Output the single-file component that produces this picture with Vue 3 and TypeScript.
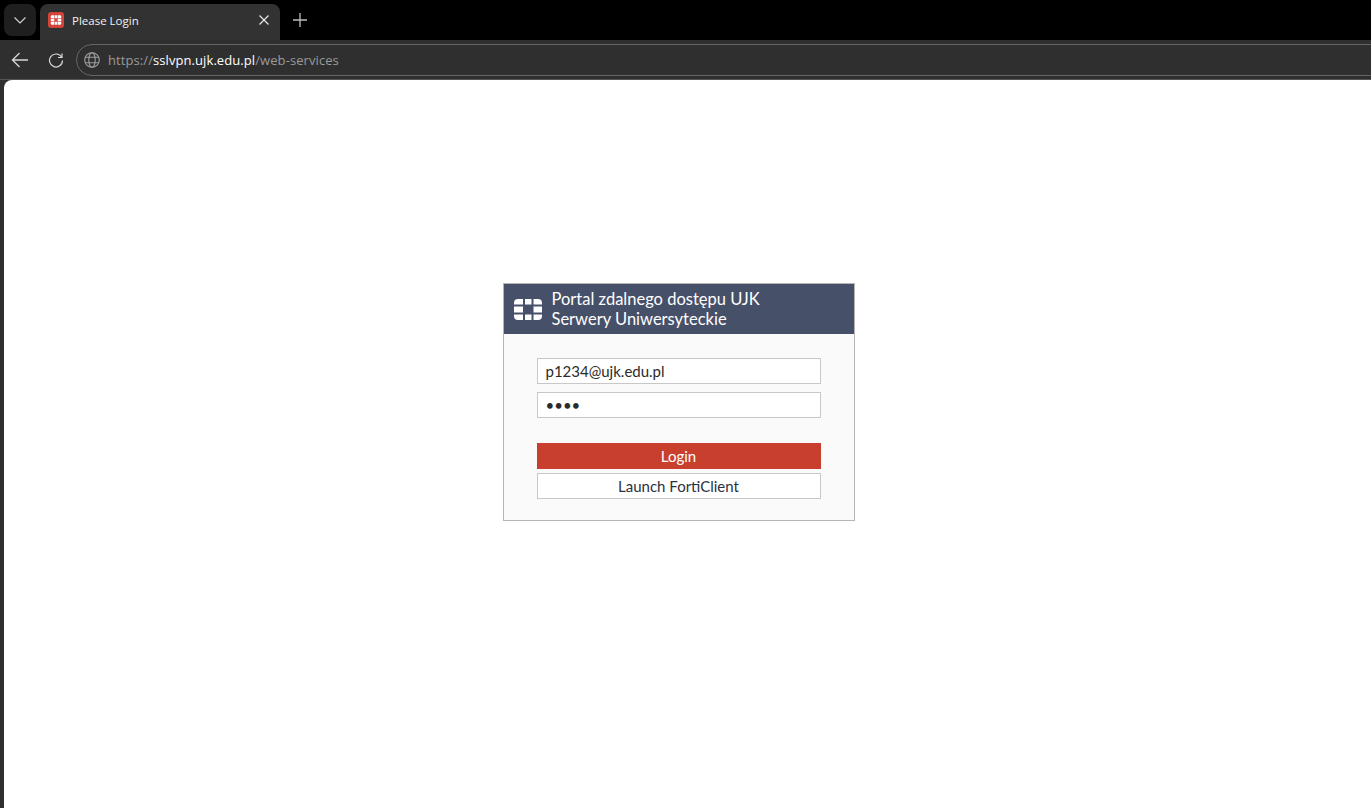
<script setup lang="ts">
const username: string = 'p1234@ujk.edu.pl'
const password: string = 'abcd'
</script>

<template>
  <div class="browser">
    <div class="tabstrip">
      <button class="tab-menu" aria-label="Tab search">
        <svg width="14" height="14" viewBox="0 0 14 14"><path d="M1.5 4.5 7 10l5.5-5.5" fill="none" stroke="#d6d6d6" stroke-width="1.1" /></svg>
      </button>
      <div class="tab">
        <svg class="favicon" width="16" height="16" viewBox="0 0 16 16">
          <rect width="16" height="16" rx="3" fill="#d2453a" />
          <g fill="#fff">
            <path d="M2.800 6.300V4.600A1.300 1.300 0 0 1 4.100 3.300H6.300V6.300Z" />
            <rect x="6.800" y="3.300" width="2.400" height="3" />
            <path d="M9.700 3.300h2.200A1.300 1.300 0 0 1 13.200 4.600v1.700H9.700Z" />
            <rect x="2.800" y="6.800" width="3.500" height="2.400" />
            <rect x="9.700" y="6.800" width="3.500" height="2.400" />
            <path d="M2.800 9.700h3.500v3H4.100A1.300 1.300 0 0 1 2.800 11.400Z" />
            <rect x="6.800" y="9.700" width="2.400" height="3" />
            <path d="M9.700 9.700h3.500v1.700a1.300 1.300 0 0 1-1.300 1.300H9.700Z" />
          </g>
        </svg>
        <span class="tab-title">Please Login</span>
        <svg class="tab-close" width="10" height="10" viewBox="0 0 10 10"><path d="M.5.5l9 9M9.500.5l-9 9" stroke="#e8e8e8" stroke-width="1.2" /></svg>
      </div>
      <svg class="new-tab" width="16" height="16" viewBox="0 0 16 16"><path d="M8 1v14M1 8h14" stroke="#bdbdbd" stroke-width="1.3" /></svg>
    </div>

    <div class="toolbar">
      <svg class="tool back" width="18" height="16" viewBox="0 0 18 16"><path d="M8.500 1 1.500 8l7 7M1.500 8H17" fill="none" stroke="#d8d8d8" stroke-width="1.300" /></svg>
      <svg class="tool reload" width="16" height="16" viewBox="0 0 16 16">
        <path d="M13.600 5.200A6.500 6.500 0 1 0 14.500 8.500" fill="none" stroke="#d8d8d8" stroke-width="1.200" />
        <path d="M14 1.500v4H10" fill="none" stroke="#d8d8d8" stroke-width="1.200" />
      </svg>
      <div class="address">
        <svg class="globe" width="16" height="16" viewBox="0 0 16 16" fill="none" stroke="#a0a0a0" stroke-width="1.100">
          <circle cx="8" cy="8" r="7.300" />
          <ellipse cx="8" cy="8" rx="3.200" ry="7.300" />
          <path d="M1.500 5.300h13M1.500 10.700h13" />
        </svg>
        <span class="url"><span class="dim">https://</span><span class="host">sslvpn.ujk.edu.pl</span><span class="dim">/web-services</span></span>
      </div>
    </div>

    <main class="page">
      <section class="dialog">
        <header class="dialog-head">
          <svg class="logo" width="28" height="21" viewBox="0 0 28 21">
            <g fill="#fff">
              <path d="M0 5.500V4A4 4 0 0 1 4 0H9V5.500Z" />
              <rect x="11" y="0" width="6.500" height="5.500" />
              <path d="M19.500 0H24a4 4 0 0 1 4 4V5.500H19.500Z" />
              <rect x="0" y="7.500" width="9" height="6" />
              <rect x="19.500" y="7.500" width="8.500" height="6" />
              <path d="M0 15.500H9V21H4a4 4 0 0 1-4-4Z" />
              <rect x="11" y="15.500" width="6.500" height="5.500" />
              <path d="M19.500 15.500H28V17a4 4 0 0 1-4 4H19.500Z" />
            </g>
          </svg>
          <h1 class="dialog-title">Portal zdalnego dostępu UJK<br />Serwery Uniwersyteckie</h1>
        </header>
        <form class="dialog-body" @submit.prevent>
          <input class="field" type="text" :value="username" />
          <input class="field" type="password" :value="password" />
          <button class="btn primary" type="submit">Login</button>
          <button class="btn secondary" type="button">Launch FortiClient</button>
        </form>
      </section>
    </main>
  </div>
</template>

<style scoped>
.browser {
  display: flex;
  flex-direction: column;
  height: 808px;
  overflow: hidden;
  background: #2f2f2f;
}
.tabstrip {
  display: flex;
  align-items: flex-end;
  height: 40px;
  flex: none;
  background: #000;
  padding-left: 4px;
}
.tab-menu {
  align-self: flex-start;
  width: 32px;
  height: 32px;
  margin-top: 4px;
  padding: 0;
  border: 0;
  border-radius: 8px;
  background: #1f1f1f;
  display: flex;
  align-items: center;
  justify-content: center;
}
.tab {
  display: flex;
  align-items: center;
  width: 240px;
  height: 36px;
  margin-left: 4px;
  padding: 0 11px 4px 8px;
  box-sizing: border-box;
  background: #323232;
  border-radius: 8px 8px 0 0;
}
.favicon {
  flex: none;
}
.tab-title {
  flex: 1;
  margin: 2px 0 0 8px;
  font: 11.5px/16px "Open Sans", "Noto Sans", sans-serif;
  color: #f2f2f2;
}
.new-tab {
  align-self: center;
  margin-left: 12px;
}
.toolbar {
  display: flex;
  align-items: center;
  height: 40px;
  flex: none;
  box-sizing: border-box;
  background: #2f2f2f;
  border-bottom: 1px solid #555;
}
.tool {
  flex: none;
}
.back {
  margin-left: 11px;
}
.reload {
  margin-left: 19px;
}
.address {
  flex: 1;
  display: flex;
  align-items: center;
  height: 32px;
  box-sizing: border-box;
  margin-left: 12px;
  margin-right: -20px;
  padding-left: 7px;
  border: 1px solid #666;
  border-radius: 16px;
  background: #2f2f2f;
}
.url {
  margin-left: 8px;
  font: 13px/16px "Open Sans", "Noto Sans", sans-serif;
  letter-spacing: 0.08px;
}
.dim {
  color: #9a9a9a;
}
.host {
  color: #fff;
}
.page {
  flex: 1;
  margin: 0 0 0 4px;
  padding: 203px 18px 0 0;
  background: #fff;
  border-radius: 8px 0 0 0;
  display: flex;
  justify-content: center;
  align-items: flex-start;
}
.dialog {
  width: 352px;
  box-sizing: border-box;
  border: 1px solid #b5b5b5;
  background: #fafafa;
  font-family: Lato, "Open Sans", sans-serif;
}
.dialog-head {
  display: flex;
  align-items: center;
  height: 50px;
  box-sizing: border-box;
  padding-left: 10px;
  background: #475069;
}
.logo {
  flex: none;
}
.dialog-title {
  margin: 0 0 0 10px;
  font-size: 16.5px;
  font-weight: 400;
  line-height: 20px;
  color: #fff;
}
.dialog-body {
  display: flex;
  flex-direction: column;
  padding: 24px 33px 21px;
}
.field {
  height: 26px;
  box-sizing: border-box;
  margin: 0 0 8px;
  padding: 0 8px;
  border: 1px solid #c8c8c8;
  border-radius: 0;
  background: #fff;
  outline: none;
  font: 15px Lato, "Open Sans", sans-serif;
  color: #2b2b2b;
}
.btn {
  height: 26px;
  box-sizing: border-box;
  padding: 0;
  border-radius: 0;
  font: 15px Lato, "Open Sans", sans-serif;
}
.primary {
  margin-top: 17px;
  border: 0;
  background: #c93f2d;
  color: #fff;
}
.secondary {
  margin-top: 4px;
  border: 1px solid #c8c8c8;
  background: #fff;
  color: #2b3140;
}
</style>

<style>
html,
body {
  margin: 0;
  background: #2f2f2f;
}
</style>
